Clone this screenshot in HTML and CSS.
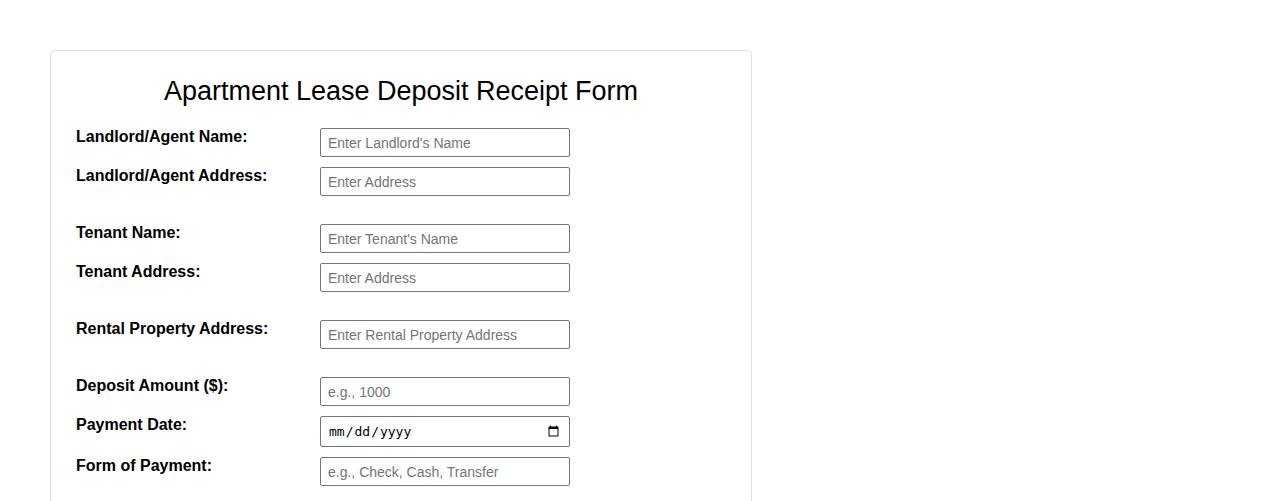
FILE: index.html
```html
<!DOCTYPE html>
<html lang="en">
<head>
    <meta charset="UTF-8">
    <meta name="viewport" content="width=device-width, initial-scale=1.0">
    <title>Apartment Lease Deposit Receipt Form</title>
    <link rel="stylesheet" href="styles.css">
</head>
<body>
    <div class="container">
        <h1>Apartment Lease Deposit Receipt Form</h1>

        <form>
            <div class="group">
                <div class="row">
                    <label for="landlordName">Landlord/Agent Name:</label>
                    <input type="text" id="landlordName" placeholder="Enter Landlord's Name">
                </div>
                <div class="row">
                    <label for="landlordAddress">Landlord/Agent Address:</label>
                    <input type="text" id="landlordAddress" placeholder="Enter Address">
                </div>
            </div>

            <div class="group">
                <div class="row">
                    <label for="tenantName">Tenant Name:</label>
                    <input type="text" id="tenantName" placeholder="Enter Tenant's Name">
                </div>
                <div class="row">
                    <label for="tenantAddress">Tenant Address:</label>
                    <input type="text" id="tenantAddress" placeholder="Enter Address">
                </div>
            </div>

            <div class="group">
                <div class="row">
                    <label for="propertyAddress">Rental Property Address:</label>
                    <input type="text" id="propertyAddress" placeholder="Enter Rental Property Address">
                </div>
            </div>

            <div class="group">
                <div class="row">
                    <label for="depositAmount">Deposit Amount ($):</label>
                    <input type="number" id="depositAmount" placeholder="e.g., 1000">
                </div>
                <div class="row">
                    <label for="paymentDate">Payment Date:</label>
                    <input type="date" id="paymentDate">
                </div>
                <div class="row">
                    <label for="paymentForm">Form of Payment:</label>
                    <input type="text" id="paymentForm" placeholder="e.g., Check, Cash, Transfer">
                </div>
            </div>
        </form>
    </div>
</body>
</html>
```

FILE: styles.css
```css
body { font-family: Arial, "Liberation Sans", sans-serif; margin: 0; padding: 50px; background: #fff; color: #000; }
.container { width: 650px; padding: 10px 25px 20px; border: 1px solid #e0e0e0; border-radius: 5px; }
h1 { font-size: 27px; font-weight: normal; text-align: center; margin: 15px 0 21px; }
.group { margin-bottom: 28px; }
.row { display: flex; align-items: flex-start; margin-bottom: 10px; }
.group .row:last-child { margin-bottom: 0; }
label { width: 244px; font-size: 16px; font-weight: bold; }
input { width: 250px; height: 29px; box-sizing: border-box; padding: 5px 7px; font-family: Arial, "Liberation Sans", sans-serif; font-size: 14px; border: 1px solid #767676; border-radius: 2px; }
input::placeholder { color: #757575; }
input[type="date"] { height: 31px; font-family: "DejaVu Sans Mono", monospace; font-size: 13px; }
input[type="number"]::-webkit-inner-spin-button { -webkit-appearance: none; }
```
